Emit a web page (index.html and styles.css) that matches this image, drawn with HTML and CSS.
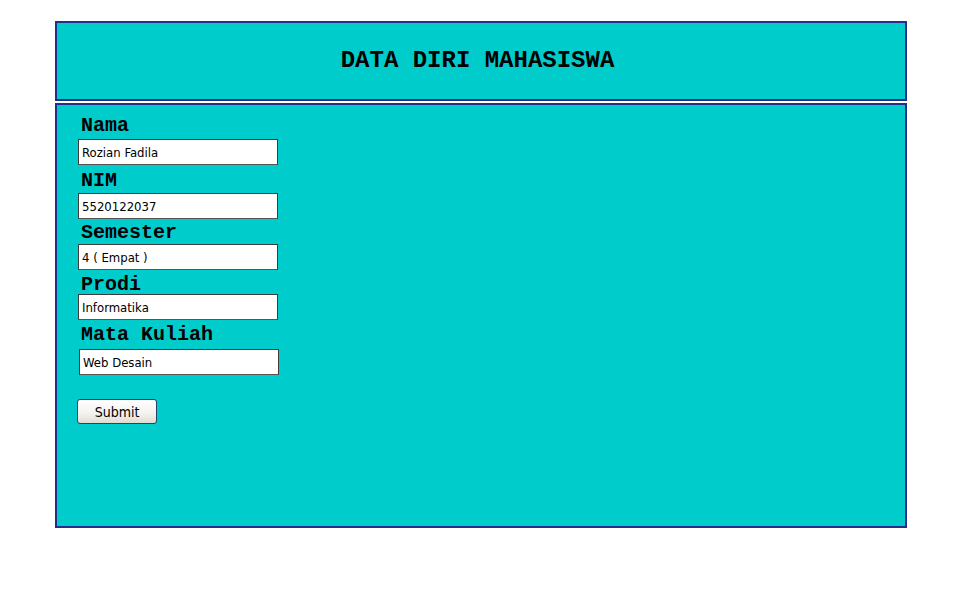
FILE: index.html
```html
<!DOCTYPE html>
<html>
<head>
<meta charset="utf-8">
<title>Data Diri Mahasiswa</title>
<link rel="stylesheet" href="styles.css">
</head>
<body>
<div class="page">
  <header class="header">
    <h1 class="title">DATA DIRI MAHASISWA</h1>
  </header>
  <form class="panel">
    <label class="label label-first">Nama</label>
    <input class="field f-nama" type="text" value="Rozian Fadila">
    <label class="label">NIM</label>
    <input class="field f-nim" type="text" value="5520122037">
    <label class="label l-sem">Semester</label>
    <input class="field f-sem" type="text" value="4 ( Empat )">
    <label class="label l-prodi">Prodi</label>
    <input class="field f-prodi" type="text" value="Informatika">
    <label class="label l-mk">Mata Kuliah</label>
    <input class="field f-mk" type="text" value="Web Desain">
    <button class="submit" type="button">Submit</button>
  </form>
</div>
</body>
</html>
```

FILE: styles.css
```css
html, body {
  margin: 0;
  padding: 0;
  background: #ffffff;
}

.page {
  padding: 21px 0 0 55px;
}

.header {
  box-sizing: border-box;
  width: 852px;
  height: 80px;
  background: #00cccc;
  border: 2px solid #232f8a;
  display: flex;
  align-items: center;
  justify-content: center;
  padding-right: 7px;
}

.title {
  margin: 0;
  font-family: "Liberation Mono", "Courier New", monospace;
  font-weight: bold;
  font-size: 24px;
  line-height: 28px;
  color: #000;
}

.panel {
  box-sizing: border-box;
  width: 852px;
  height: 425px;
  margin-top: 2px;
  background: #00cccc;
  border: 2px solid #232f8a;
  padding: 0 0 0 21px;
  display: flex;
  flex-direction: column;
  align-items: flex-start;
}

.label {
  display: block;
  margin: 8px 0 0 3px;
  font-family: "Liberation Mono", "Courier New", monospace;
  font-weight: bold;
  font-size: 20px;
  line-height: 16px;
  color: #000;
}

.label-first {
  margin-top: 13px;
}

.l-sem { margin-top: 6px; }
.l-prodi { margin-top: 7px; }
.l-mk { margin-top: 7px; }

.field {
  box-sizing: border-box;
  width: 200px;
  height: 26px;
  margin: 4px 0 0 0;
  padding: 0 0 0 3px;
  background: #fff;
  border: 1px solid #3c3c3c;
  border-bottom-color: #555;
  font-family: "Liberation Sans Narrow", "DejaVu Sans Condensed", sans-serif;
  font-size: 13px;
  color: #000;
  outline: none;
}

.f-nama { margin-top: 5px; }
.f-nim { margin-top: 4px; }
.f-sem { margin-top: 3px; }
.f-prodi { margin-top: 1px; }
.f-mk { margin-top: 6px; margin-left: 1px; }

.submit {
  box-sizing: border-box;
  width: 80px;
  height: 25px;
  margin-top: 24px;
  margin-left: -1px;
  padding: 0;
  border: 1px solid #27406e;
  border-radius: 3px;
  background: linear-gradient(#ffffff, #f3f2ee 60%, #dedbd2);
  font-family: "Liberation Sans Narrow", "DejaVu Sans Condensed", sans-serif;
  font-size: 14px;
  color: #000;
}
```
